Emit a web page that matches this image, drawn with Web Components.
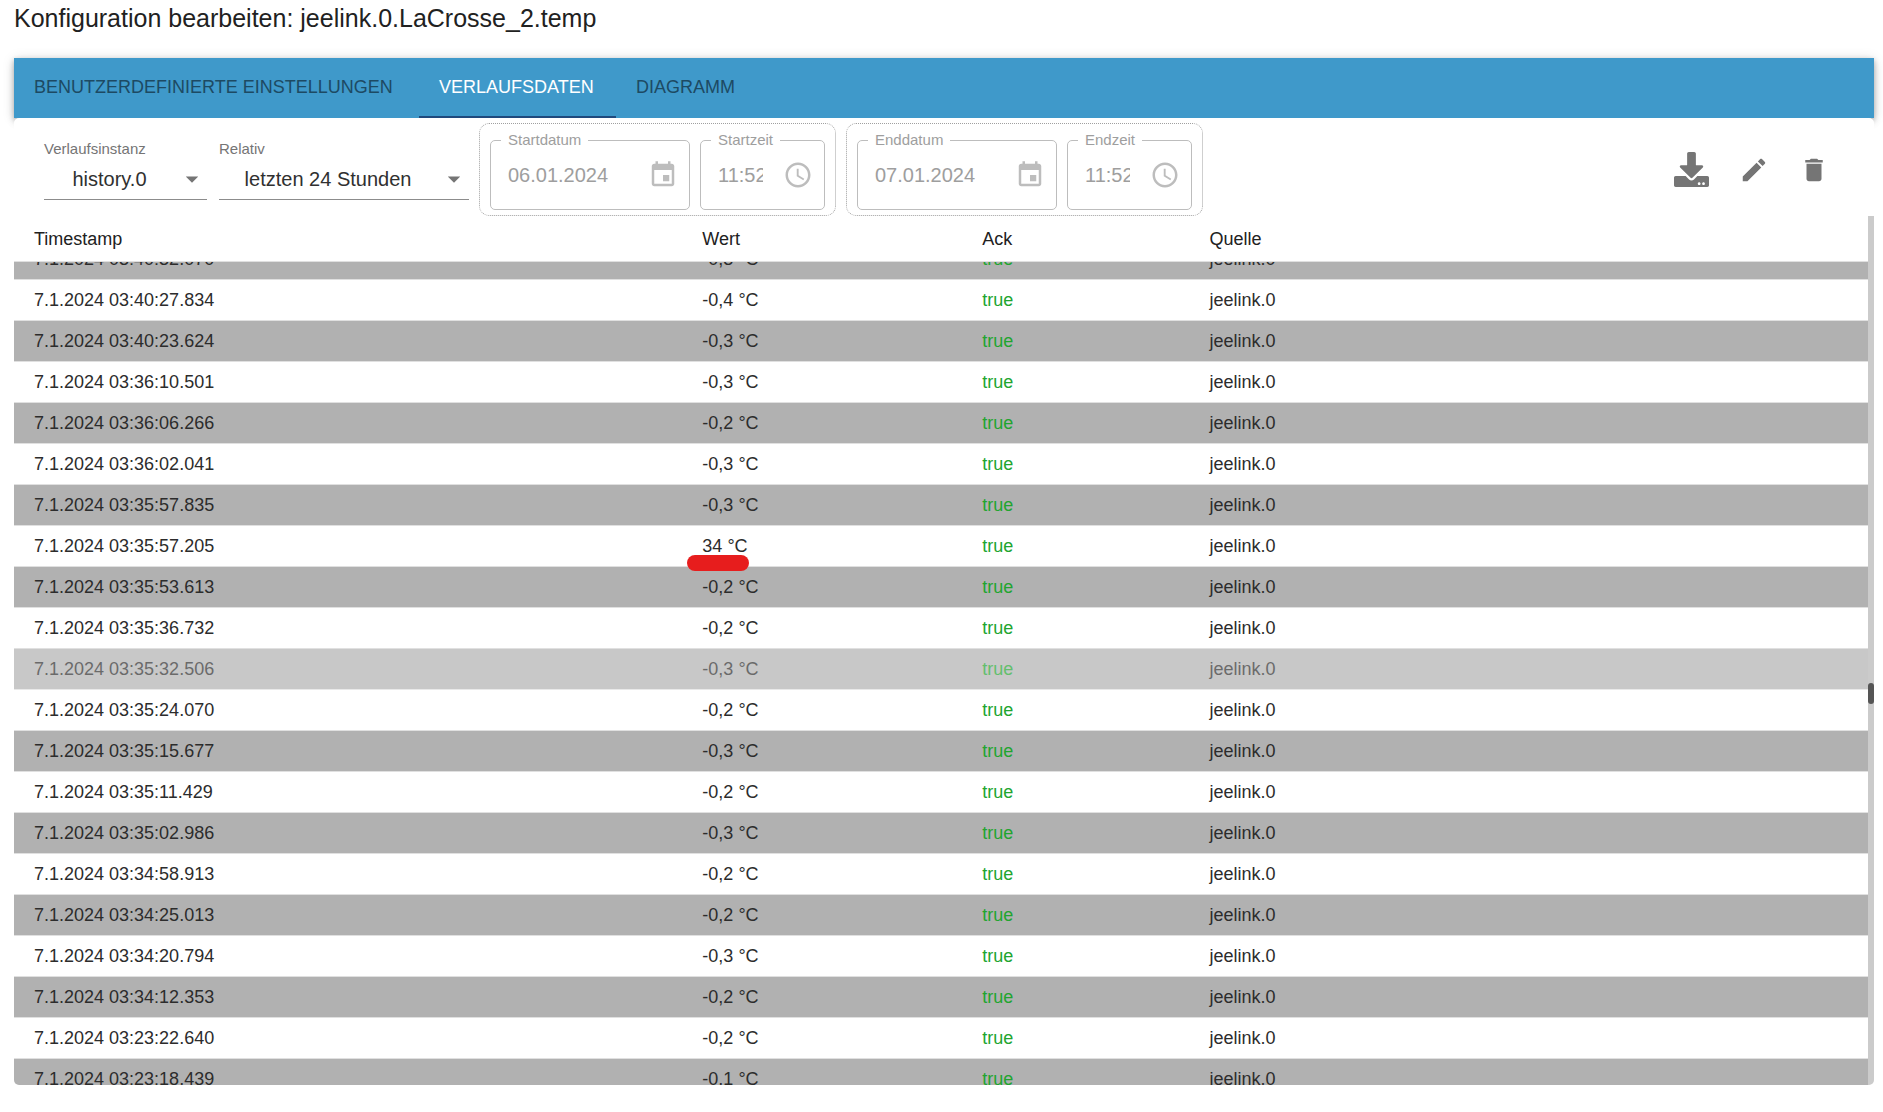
<!DOCTYPE html>
<html lang="de">
<head>
<meta charset="utf-8">
<title>Konfiguration bearbeiten</title>
<style>
  body {
    margin: 0;
    background: #fff;
    color: #212121;
    font-family: "Liberation Sans", Arial, sans-serif;
  }
</style>
</head>
<body>
<config-dialog heading="Konfiguration bearbeiten: jeelink.0.LaCrosse_2.temp">
  <tab-bar slot="tabs"></tab-bar>
  <history-toolbar slot="toolbar">
    <select-field slot="selects" label="Verlaufsinstanz" value="history.0" size="narrow"></select-field>
    <select-field slot="selects" label="Relativ" value="letzten 24 Stunden" size="wide"></select-field>
    <range-group>
      <picker-field label="Startdatum" value="06.01.2024" icon="date"></picker-field>
      <picker-field label="Startzeit" value="11:52" icon="time"></picker-field>
    </range-group>
    <range-group>
      <picker-field label="Enddatum" value="07.01.2024" icon="date"></picker-field>
      <picker-field label="Endzeit" value="11:52" icon="time"></picker-field>
    </range-group>
  </history-toolbar>
  <history-table></history-table>
</config-dialog>

<script>
class ConfigDialog extends HTMLElement {
  constructor() {
    super();
    this.attachShadow({ mode: "open" });
    this.shadowRoot.innerHTML = `
      <style>
        :host {
          display: flex;
          flex-direction: column;
          box-sizing: border-box;
          height: 100vh;
          padding: 0 9px 27px 14px;
        }

        h1 {
          margin: 0 0 21px;
          font-size: 25px;
          font-weight: 400;
          line-height: 37px;
        }

        .bar {
          background: #3f99ca;
          box-shadow: 0 2px 5px rgba(0, 0, 0, 0.2), 0 4px 8px rgba(0, 0, 0, 0.14), 0 1px 12px rgba(0, 0, 0, 0.12);
        }

        .paper {
          position: relative;
          display: flex;
          flex: 1;
          flex-direction: column;
          min-height: 0;
          overflow: hidden;
          border-radius: 5px;
          background: #fff;
        }
      </style>
      <h1></h1>
      <div class="bar"><slot name="tabs"></slot></div>
      <div class="paper">
        <slot name="toolbar"></slot>
        <slot></slot>
      </div>
    `;
  }

  connectedCallback() {
    this.shadowRoot.querySelector("h1").textContent = this.getAttribute("heading");
  }
}

class TabBar extends HTMLElement {
  constructor() {
    super();
    this.attachShadow({ mode: "open" });
    this.shadowRoot.innerHTML = `
      <style>
        :host {
          display: block;
        }

        div {
          display: flex;
        }

        button {
          box-sizing: border-box;
          height: 60px;
          min-width: 112px;
          padding: 0 20px;
          border: 0;
          border-bottom: 2px solid transparent;
          background: none;
          color: #1d4a63;
          font: 18px/24px "Liberation Sans", Arial, sans-serif;
          text-align: left;
          text-transform: uppercase;
          white-space: nowrap;
        }

        .first {
          min-width: 405px;
        }

        .active {
          min-width: 197px;
          border-color: #1f4a7d;
          color: #fff;
        }
      </style>
      <div role="tablist">
        <button class="first" role="tab" aria-selected="false">Benutzerdefinierte Einstellungen</button>
        <button class="active" role="tab" aria-selected="true">Verlaufsdaten</button>
        <button role="tab" aria-selected="false">Diagramm</button>
      </div>
    `;
  }
}

class HistoryToolbar extends HTMLElement {
  constructor() {
    super();
    this.attachShadow({ mode: "open" });
    this.shadowRoot.innerHTML = `
      <style>
        :host {
          display: flex;
          align-items: center;
          gap: 10px;
          padding: 5px 30px 0;
        }

        .selects {
          display: flex;
          gap: 12px;
        }

        .actions {
          display: flex;
          align-items: center;
          margin-left: auto;
        }

        button {
          display: flex;
          padding: 15px;
          border: 0;
          background: none;
        }

        svg {
          width: 30px;
          height: 30px;
          fill: #757575;
        }

        .export svg {
          width: 35px;
          height: 35px;
        }
      </style>
      <div class="selects"><slot name="selects"></slot></div>
      <slot></slot>
      <div class="actions">
        <button class="export" aria-label="Exportieren">
          <svg viewBox="0 0 512 512"><path d="M216 0h80c13.300 0 24 10.700 24 24v168h87.700c17.800 0 26.700 21.500 14.100 34.100L269.700 378.300c-7.500 7.500-19.800 7.500-27.300 0L90.100 226.100c-12.600-12.600-3.700-34.100 14.100-34.100H192V24c0-13.300 10.700-24 24-24zm296 376v112c0 13.300-10.700 24-24 24H24c-13.300 0-24-10.700-24-24V376c0-13.300 10.700-24 24-24h146.700l49 49c20.100 20.100 52.500 20.100 72.600 0l49-49H488c13.300 0 24 10.700 24 24zm-124 88c0-11-9-20-20-20s-20 9-20 20 9 20 20 20 20-9 20-20zm64 0c0-11-9-20-20-20s-20 9-20 20 9 20 20 20 20-9 20-20z"/></svg>
        </button>
        <button aria-label="Bearbeiten">
          <svg viewBox="0 0 24 24"><path d="M3 17.250V21h3.750L17.810 9.940l-3.750-3.750L3 17.250zM20.710 7.040c.39-.39.39-1.020 0-1.410l-2.340-2.340c-.39-.39-1.020-.39-1.410 0l-1.830 1.830 3.750 3.750 1.830-1.830z"/></svg>
        </button>
        <button aria-label="Löschen">
          <svg viewBox="0 0 24 24"><path d="M6 19c0 1.100.9 2 2 2h8c1.100 0 2-.9 2-2V7H6v12zM19 4h-3.500l-1-1h-5l-1 1H5v2h14V4z"/></svg>
        </button>
      </div>
    `;
  }
}

class SelectField extends HTMLElement {
  constructor() {
    super();
    this.attachShadow({ mode: "open" });
    this.shadowRoot.innerHTML = `
      <style>
        :host {
          display: grid;
          width: 163px;
        }

        :host([size="wide"]) {
          width: 250px;
        }

        label {
          color: #757575;
          font-size: 15px;
          line-height: 20px;
        }

        .control {
          display: grid;
          align-items: center;
          border-bottom: 1px solid #8c8c8c;
        }

        select,
        svg {
          grid-area: 1 / 1;
        }

        select {
          appearance: none;
          width: 100%;
          height: 40px;
          padding: 0 32px 0 0;
          border: 0;
          background: none;
          color: #303030;
          font: 20px "Liberation Sans", Arial, sans-serif;
          text-align-last: center;
        }

        svg {
          justify-self: end;
          width: 30px;
          height: 30px;
          fill: #757575;
          pointer-events: none;
        }
      </style>
      <label for="select"></label>
      <div class="control">
        <select id="select"><option></option></select>
        <svg viewBox="0 0 24 24"><path d="M7 10l5 5 5-5z"/></svg>
      </div>
    `;
  }

  connectedCallback() {
    this.shadowRoot.querySelector("label").textContent = this.getAttribute("label");
    this.shadowRoot.querySelector("option").textContent = this.getAttribute("value");
  }
}

class RangeGroup extends HTMLElement {
  constructor() {
    super();
    this.attachShadow({ mode: "open" });
    this.shadowRoot.innerHTML = `
      <style>
        :host {
          display: flex;
          gap: 10px;
          padding: 7px 10px 5px;
          border: 1px dotted #a0a0a0;
          border-radius: 10px;
        }
      </style>
      <slot></slot>
    `;
  }
}

const pickerIcons = {
  date: "M17 12h-5v5h5v-5zM16 1v2H8V1H6v2H5c-1.110 0-1.990.9-1.990 2L3 19c0 1.100.89 2 2 2h14c1.100 0 2-.9 2-2V5c0-1.100-.9-2-2-2h-1V1h-2zm3 18H5V8h14v11z",
  time: "M11.990 2C6.470 2 2 6.480 2 12s4.470 10 9.990 10C17.520 22 22 17.520 22 12S17.520 2 11.990 2zM12 20c-4.420 0-8-3.580-8-8s3.580-8 8-8 8 3.580 8 8-3.580 8-8 8zM12.500 7H11v6l5.250 3.150.75-1.230-4.500-2.670z"
};

class PickerField extends HTMLElement {
  constructor() {
    super();
    this.attachShadow({ mode: "open" });
    this.shadowRoot.innerHTML = `
      <style>
        :host {
          display: block;
          width: 200px;
        }

        :host([icon="time"]) {
          width: 125px;
        }

        fieldset {
          min-width: 0;
          margin: 0;
          padding: 0 10px;
          border: 1px solid #bdbdbd;
          border-radius: 5px;
        }

        legend {
          padding: 0 7px;
          color: #9e9e9e;
          font-size: 15px;
          line-height: 18px;
        }

        .row {
          display: flex;
          align-items: center;
          gap: 20px;
          height: 52px;
          padding: 0 1px 8px 7px;
        }

        input {
          flex: 1;
          min-width: 0;
          padding: 0;
          border: 0;
          background: none;
          color: #9e9e9e;
          font: 20px "Liberation Sans", Arial, sans-serif;
        }

        svg {
          flex: none;
          width: 30px;
          height: 30px;
          fill: #bdbdbd;
        }
      </style>
      <fieldset>
        <legend><label for="input"></label></legend>
        <div class="row">
          <input id="input" type="text" disabled>
          <svg viewBox="0 0 24 24"><path/></svg>
        </div>
      </fieldset>
    `;
  }

  connectedCallback() {
    this.shadowRoot.querySelector("label").textContent = this.getAttribute("label");
    this.shadowRoot.querySelector("input").value = this.getAttribute("value");
    this.shadowRoot.querySelector("path").setAttribute("d", pickerIcons[this.getAttribute("icon")]);
  }
}

const rows = [
  ["7.1.2024 03:40:32.070", "-0,3"],
  ["7.1.2024 03:40:27.834", "-0,4"],
  ["7.1.2024 03:40:23.624", "-0,3"],
  ["7.1.2024 03:36:10.501", "-0,3"],
  ["7.1.2024 03:36:06.266", "-0,2"],
  ["7.1.2024 03:36:02.041", "-0,3"],
  ["7.1.2024 03:35:57.835", "-0,3"],
  ["7.1.2024 03:35:57.205", "34", "marked"],
  ["7.1.2024 03:35:53.613", "-0,2"],
  ["7.1.2024 03:35:36.732", "-0,2"],
  ["7.1.2024 03:35:32.506", "-0,3", "hover"],
  ["7.1.2024 03:35:24.070", "-0,2"],
  ["7.1.2024 03:35:15.677", "-0,3"],
  ["7.1.2024 03:35:11.429", "-0,2"],
  ["7.1.2024 03:35:02.986", "-0,3"],
  ["7.1.2024 03:34:58.913", "-0,2"],
  ["7.1.2024 03:34:25.013", "-0,2"],
  ["7.1.2024 03:34:20.794", "-0,3"],
  ["7.1.2024 03:34:12.353", "-0,2"],
  ["7.1.2024 03:23:22.640", "-0,2"],
  ["7.1.2024 03:23:18.439", "-0,1"]
];

class HistoryTable extends HTMLElement {
  constructor() {
    super();
    this.attachShadow({ mode: "open" });
    this.shadowRoot.innerHTML = `
      <style>
        :host {
          display: flex;
          flex: 1;
          min-height: 0;
        }

        .scroller {
          flex: 1;
          overflow: auto;
          scrollbar-width: none;
        }

        table {
          width: 100%;
          table-layout: fixed;
          border-spacing: 0;
          font-size: 18px;
          line-height: 20px;
          text-align: left;
        }

        th,
        td {
          padding: 10px 20px;
          border-bottom: 1px solid #e0e0e0;
          white-space: nowrap;
        }

        th {
          position: sticky;
          top: 0;
          z-index: 2;
          box-sizing: border-box;
          height: 46px;
          background: #fff;
          font-weight: 400;
        }

        th:nth-child(1) { width: 36.05%; }
        th:nth-child(2) { width: 15.1%; }
        th:nth-child(3) { width: 12.25%; }

        td {
          color: #2c2c2c;
        }

        tbody tr:nth-child(odd) {
          background: #b1b1b1;
        }

        tr.hover {
          opacity: 0.7;
        }

        .ack {
          color: #21a52f;
        }

        .marked .value {
          position: relative;
        }

        /* red pen stroke under the outlier */
        .marked .value::after {
          content: "";
          position: absolute;
          z-index: 1;
          top: 29px;
          left: 5px;
          width: 62px;
          height: 16px;
          border-radius: 8px;
          background: #e71d1d;
        }

        /* scroll bar */
        .track {
          display: grid;
          grid-template-rows: 467fr 21px 381fr;
          width: 6px;
          background: #cbcbcb;
        }

        .thumb {
          grid-row: 2;
          border-radius: 3px;
          background: #555;
        }
      </style>
      <div class="scroller">
        <table>
          <thead>
            <tr><th>Timestamp</th><th>Wert</th><th>Ack</th><th>Quelle</th></tr>
          </thead>
          <tbody></tbody>
        </table>
      </div>
      <div class="track"><div class="thumb"></div></div>
    `;
  }

  connectedCallback() {
    this.shadowRoot.querySelector("tbody").innerHTML = rows.map(([time, value, state = ""]) => `
      <tr class="${state}">
        <td>${time}</td>
        <td class="value">${value} °C</td>
        <td class="ack">true</td>
        <td>jeelink.0</td>
      </tr>
    `).join("");
    this.shadowRoot.querySelector(".scroller").scrollTop = 23;
  }
}

customElements.define("config-dialog", ConfigDialog);
customElements.define("tab-bar", TabBar);
customElements.define("history-toolbar", HistoryToolbar);
customElements.define("select-field", SelectField);
customElements.define("range-group", RangeGroup);
customElements.define("picker-field", PickerField);
customElements.define("history-table", HistoryTable);
</script>
</body>
</html>
